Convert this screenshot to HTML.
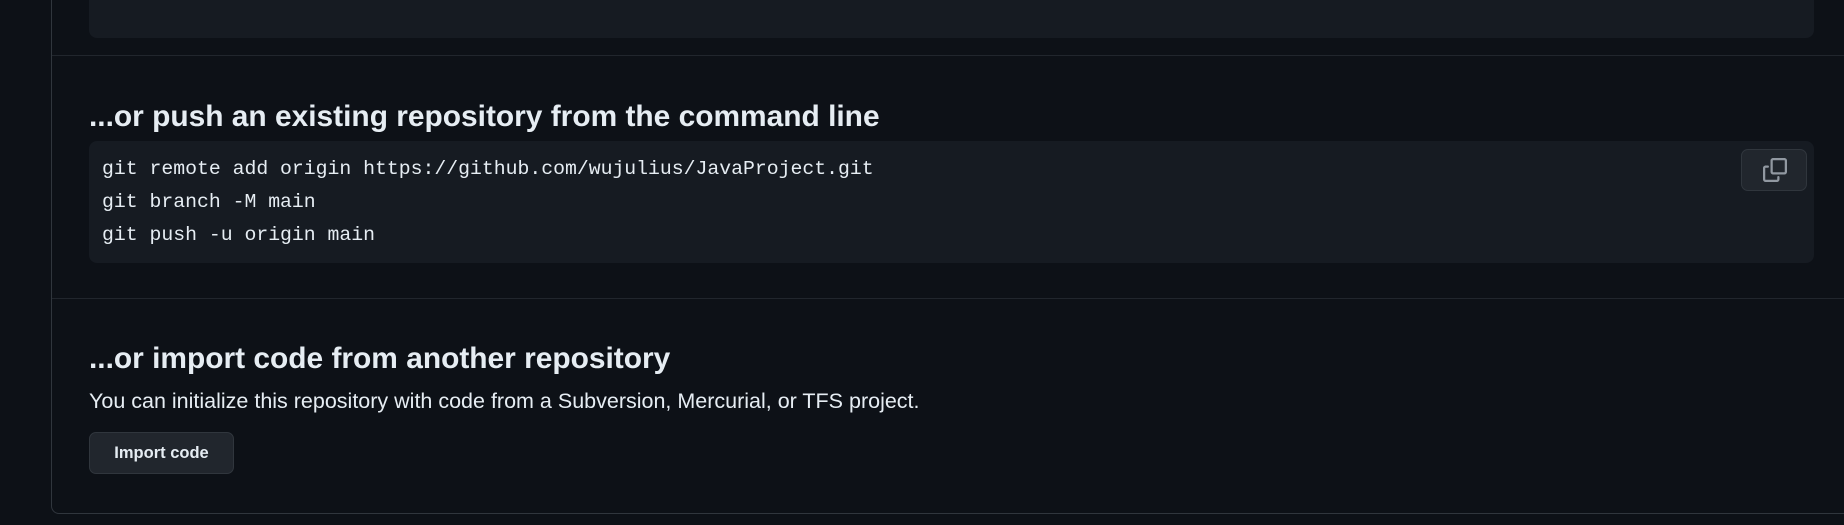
<!DOCTYPE html>
<html><head><style>
body{margin:0;width:1844px;height:525px;background:#0d1117;overflow:hidden;font-family:"Liberation Sans",sans-serif;color:#e6edf3;position:relative}
.box{position:absolute;left:51px;top:-20px;width:1830px;height:534px;background:#0d1117;border:1px solid #30363d;border-radius:8px;box-sizing:border-box}
.code{position:absolute;left:89px;width:1725px;background:#161b22;border-radius:8px}
.hr{position:absolute;left:52px;right:0;height:1px;background:#21262d}
h3{position:absolute;left:89px;margin:0;font-size:29.9px;font-weight:600;white-space:nowrap;color:#e6edf3}
.ln{position:absolute;left:102px;font-family:"Liberation Mono",monospace;font-size:19.8px;white-space:pre;color:#e6edf3}
</style></head><body>
<div class="box"></div>
<div class="code" style="top:-20px;height:58px"></div>
<div class="hr" style="top:55px"></div>
<h3 style="top:100px">...or push an existing repository from the command line</h3>
<div class="code" style="top:141px;height:122px"></div>
<div class="ln" style="top:158px">git remote add origin https://github.com/wujulius/JavaProject.git</div>
<div class="ln" style="top:191px">git branch -M main</div>
<div class="ln" style="top:224px">git push -u origin main</div>
<div style="position:absolute;left:1741px;top:149px;width:66px;height:42px;box-sizing:border-box;border:1px solid #30363d;border-radius:7px;background:#21262d"></div>
<svg style="position:absolute;left:1763px;top:158px" width="24" height="24" viewBox="0 0 16 16" fill="#9198a1"><path d="M0 6.75C0 5.784.784 5 1.750 5h1.5a.75.75 0 0 1 0 1.5h-1.5a.25.25 0 0 0-.25.25v7.5c0 .138.112.25.25.25h7.5a.25.25 0 0 0 .25-.25v-1.5a.75.75 0 0 1 1.5 0v1.5A1.75 1.75 0 0 1 9.25 16h-7.5A1.75 1.75 0 0 1 0 14.250Z"/><path d="M5 1.75C5 .784 5.784 0 6.75 0h7.5C15.216 0 16 .784 16 1.75v7.5A1.75 1.75 0 0 1 14.25 11h-7.5A1.75 1.75 0 0 1 5 9.25Zm1.75-.25a.25.25 0 0 0-.25.25v7.5c0 .138.112.25.25.25h7.5a.25.25 0 0 0 .25-.25v-7.5a.25.25 0 0 0-.25-.25Z"/></svg>
<div class="hr" style="top:298px"></div>
<h3 style="top:342px">...or import code from another repository</h3>
<div style="position:absolute;left:89px;top:389px;font-size:21.5px;white-space:nowrap">You can initialize this repository with code from a Subversion, Mercurial, or TFS project.</div>
<div style="position:absolute;left:89px;top:432px;width:145px;height:42px;box-sizing:border-box;border:1px solid #30363d;border-radius:7px;background:#21262d;font-size:16.5px;font-weight:bold;line-height:40px;text-align:center">Import code</div>
</body></html>
